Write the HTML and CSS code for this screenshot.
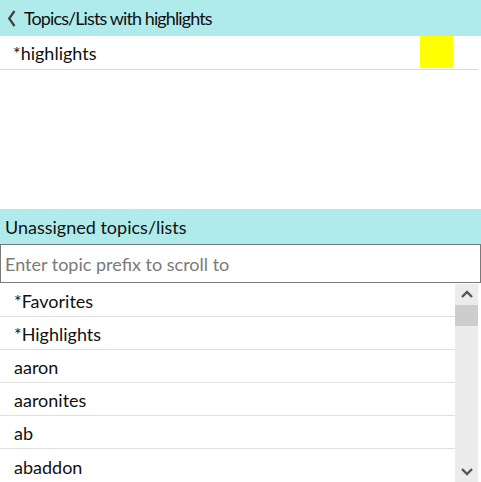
FILE: index.html
```html
<!DOCTYPE html>
<html>
<head>
<meta charset="utf-8">
<link rel="stylesheet" href="styles.css">
</head>
<body>
<div class="page">
  <div class="header first">
    <svg class="back" width="9" height="17" viewBox="0 0 9 17"><path d="M7.5 1 L2.2 8.5 L7.5 16" fill="none" stroke="#404040" stroke-width="2.2"/></svg>
    <span class="title">Topics/Lists with highlights</span>
  </div>
  <div class="hl-area">
    <div class="hl-row">
      <span class="hl-name">*highlights</span>
      <span class="swatch"></span>
    </div>
  </div>
  <div class="header second"><span>Unassigned topics/lists</span></div>
  <div class="search"><span class="placeholder">Enter topic prefix to scroll to</span></div>
  <div class="listwrap">
    <div class="list">
      <div class="item">*Favorites</div>
      <div class="item">*Highlights</div>
      <div class="item">aaron</div>
      <div class="item">aaronites</div>
      <div class="item">ab</div>
      <div class="item last">abaddon</div>
    </div>
    <div class="scrollbar">
      <svg class="arrow" width="12" height="8" viewBox="0 0 12 8"><path d="M1 7 L6 2 L11 7" fill="none" stroke="#555" stroke-width="2.4"/></svg>
      <div class="thumb"></div>
      <div class="track"></div>
      <svg class="arrow" width="12" height="8" viewBox="0 0 12 8"><path d="M1 1 L6 6 L11 1" fill="none" stroke="#555" stroke-width="2.4"/></svg>
    </div>
  </div>
</div>
</body>
</html>
```
FILE: styles.css
```css
html, body { margin: 0; padding: 0; background: #fff; }
body { font-family: Lato, "Noto Sans", sans-serif; font-size: 18px; color: #111; }
.page { width: 481px; height: 482px; overflow: hidden; display: flex; flex-direction: column; }
.header { background: #b0ebec; height: 36px; display: flex; align-items: center; padding-left: 5px; padding-top: 1px; box-sizing: border-box; }
.header.first { padding-left: 7px; }
.back { margin-right: 8px; }
.title { letter-spacing: -0.9px; }
.hl-area { height: 174px; }
.hl-row { height: 32px; border-bottom: 1px solid #d9d9d9; display: flex; align-items: center; padding-left: 13px; padding-top: 1px; box-sizing: content-box; margin-right: 3px; }
.hl-name { flex: 1; }
.swatch { width: 33px; height: 32px; background: #ffff00; margin-right: 25px; margin-top: -1px; }
.header.second { height: 36px; }
.search { height: 39px; border: 1px solid #7a7a7a; box-sizing: border-box; display: flex; align-items: center; padding-left: 4px; }
.placeholder { color: #7a7a7a; }
.listwrap { flex: 1; display: flex; padding-top: 1px; }
.list { flex: 1; }
.item { height: 32px; border-bottom: 1px solid #e0e0e0; display: flex; align-items: center; padding-left: 14px; padding-top: 2px; box-sizing: border-box; height: 33px; }
.item.last { border-bottom: none; }
.scrollbar { width: 23px; margin-right: 3px; background: #ececec; display: flex; flex-direction: column; align-items: center; }
.arrow { margin: 6px 0; }
.thumb { width: 23px; height: 21px; background: #cdcdcd; margin-top: 1px; }
.track { flex: 1; }
```
